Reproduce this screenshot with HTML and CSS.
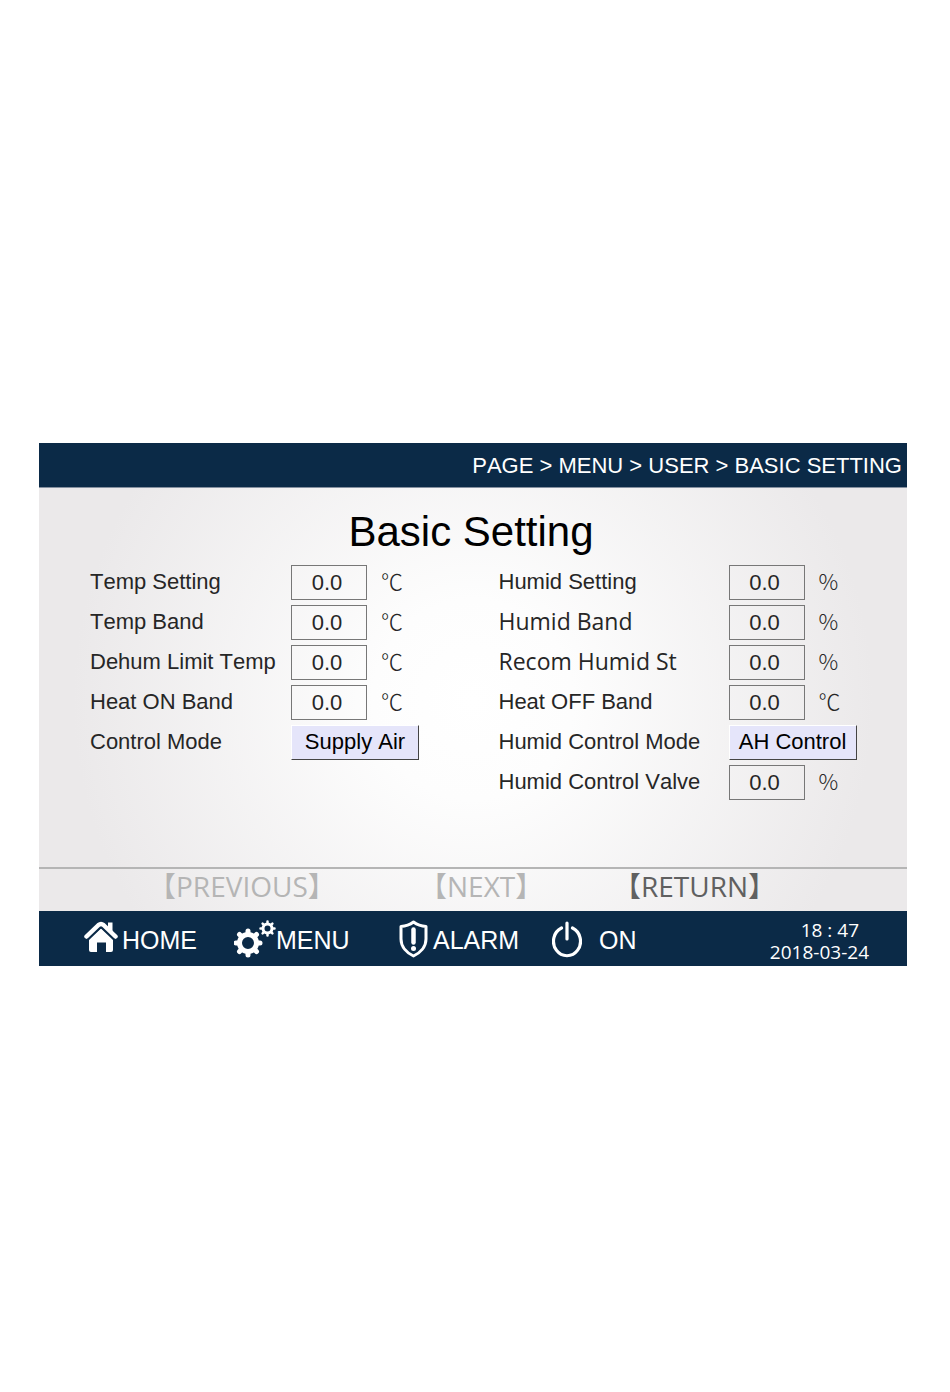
FILE: index.html
```html
<!DOCTYPE html>
<html lang="en">
<head>
  <meta charset="UTF-8">
  <meta name="viewport" content="width=device-width, initial-scale=1.0">
  <title>Basic Setting</title>
  <link rel="stylesheet" href="styles.css">
</head>
<body>
  <div class="panel">
    <header class="topbar">PAGE &gt; MENU &gt; USER &gt; BASIC SETTING</header>

    <main class="content">
      <h1>Basic Setting</h1>
      <form class="settings">
        <div class="column">
          <div class="row">
            <label for="tempSetting">Temp Setting</label>
            <input type="text" id="tempSetting" value="0.0">
            <span class="unit">℃</span>
          </div>
          <div class="row">
            <label for="tempBand">Temp Band</label>
            <input type="text" id="tempBand" value="0.0">
            <span class="unit">℃</span>
          </div>
          <div class="row">
            <label for="dehumLimit">Dehum Limit Temp</label>
            <input type="text" id="dehumLimit" value="0.0">
            <span class="unit">℃</span>
          </div>
          <div class="row">
            <label for="heatOn">Heat ON Band</label>
            <input type="text" id="heatOn" value="0.0">
            <span class="unit">℃</span>
          </div>
          <div class="row">
            <label for="controlMode">Control Mode</label>
            <button type="button" class="mode" id="controlMode">Supply Air</button>
          </div>
        </div>

        <div class="column right">
          <div class="row">
            <label for="humidSetting">Humid Setting</label>
            <input type="text" id="humidSetting" value="0.0">
            <span class="unit">%</span>
          </div>
          <div class="row">
            <label for="humidBand" class="alt">Humid Band</label>
            <input type="text" id="humidBand" value="0.0">
            <span class="unit">%</span>
          </div>
          <div class="row">
            <label for="recomHumid" class="alt">Recom Humid St</label>
            <input type="text" id="recomHumid" value="0.0">
            <span class="unit">%</span>
          </div>
          <div class="row">
            <label for="heatOff">Heat OFF Band</label>
            <input type="text" id="heatOff" value="0.0">
            <span class="unit">℃</span>
          </div>
          <div class="row">
            <label for="humidMode">Humid Control Mode</label>
            <button type="button" class="mode" id="humidMode">AH Control</button>
          </div>
          <div class="row">
            <label for="humidValve">Humid Control Valve</label>
            <input type="text" id="humidValve" value="0.0">
            <span class="unit">%</span>
          </div>
        </div>
      </form>

      <nav class="pager">
        <button type="button" disabled>【PREVIOUS】</button>
        <button type="button" disabled>【NEXT】</button>
        <button type="button">【RETURN】</button>
      </nav>
    </main>

    <footer class="bottombar">
      <button type="button">
        <svg class="home" width="34" height="34" viewBox="0 0 34 34">
          <path d="M5 20 L17 8.500 L29 20 V30 Q29 32 27 32 H22 V22.500 H13 V32 H7 Q5 32 5 30 Z" fill="#fff"/>
          <path d="M2.500 18 L14.500 7 Q17 5 19.500 7 L31.500 18" fill="none" stroke="#0b2a47" stroke-width="5"/>
          <path d="M2.500 16.500 L14.500 5 Q17 3 19.500 5 L31.500 16.500" fill="none" stroke="#fff" stroke-width="4.500" stroke-linecap="round" stroke-linejoin="round"/>
          <path d="M24 2.500h4.500v11l-4.500-4z" fill="#fff"/>
        </svg>
        <span>HOME</span>
      </button>
      <button type="button">
        <svg width="42" height="40" viewBox="0 0 42 40">
          <g fill="none" stroke="#fff">
            <circle cx="14" cy="24" r="8.500" stroke-width="5"/>
            <path d="M14 12v2M14 34v2M2 24h2M24 24h2M5.500 15.500l2 2M20.500 30.500l2 2M5.500 32.500l2-2M20.500 17.500l2-2" stroke-width="5" stroke-linecap="round"/>
            <circle cx="33.500" cy="9.500" r="4.500" stroke-width="3"/>
            <path d="M33.500 2.500v1M33.500 15.500v1M26.500 9.500h1M39.500 9.500h1M28.600 4.600l1 1M37.400 13.400l1 1M28.600 14.400l1-1M37.400 5.600l1-1" stroke-width="2.500" stroke-linecap="round"/>
          </g>
        </svg>
        <span>MENU</span>
      </button>
      <button type="button">
        <svg class="shield" width="29" height="38" viewBox="0 0 29 38">
          <path d="M14.500 2 Q20 6 27 6.500 V19 C27 27 21 33 14.500 36 C8 33 2 27 2 19 V6.500 Q9 6 14.500 2 Z" fill="none" stroke="#fff" stroke-width="3" stroke-linejoin="round"/>
          <path d="M14.500 9.500v13" stroke="#fff" stroke-width="4.500" stroke-linecap="round"/>
          <circle cx="14.500" cy="28.500" r="2.500" fill="#fff"/>
        </svg>
        <span>ALARM</span>
      </button>
      <button type="button">
        <svg class="power" width="30" height="38" viewBox="0 0 30 38">
          <path d="M9.500 8 A13.500 14.500 0 1 0 20.500 8" fill="none" stroke="#fff" stroke-width="3.200" stroke-linecap="round"/>
          <path d="M15 3v16" stroke="#fff" stroke-width="3.200" stroke-linecap="round"/>
        </svg>
        <span>ON</span>
      </button>
      <div class="clock">
        <div class="time">18 : 47</div>
        <div>2018-03-24</div>
      </div>
    </footer>
  </div>
</body>
</html>
```

FILE: styles.css
```css
* {
  box-sizing: border-box;
}
body {
  margin: 0;
  background: #fff;
  color: #262626;
  font-family: "Liberation Sans", Arial, sans-serif;
  font-size: 22px;
  font-kerning: none;
}
.panel {
  margin: 443px 43px 40px 39px;
}
.topbar {
  height: 45px;
  line-height: 46px;
  padding-right: 5px;
  background: #0b2a47;
  border-bottom: 1px solid #8590a0;
  color: #fff;
  text-align: right;
}
.content {
  background: radial-gradient(circle at 50% 50%, #fff 0, #fdfdfd 100px, #ebe9ea 400px);
}
h1 {
  margin: 0;
  padding: 20px 4px 0 0;
  line-height: 48px;
  font-size: 42px;
  font-weight: normal;
  text-align: center;
  color: #000;
}
.settings {
  display: grid;
  grid-template-columns: 50% 1fr;
  min-height: 311px;
  padding: 9px 0 0 51px;
}
.column {
  display: flex;
  flex-direction: column;
  gap: 5px;
}
.row {
  display: grid;
  grid-template-columns: 201px 76px 1fr;
  height: 35px;
}
.right .row {
  grid-template-columns: 230px 76px 1fr;
}
.row label {
  line-height: 34px;
  white-space: nowrap;
}
.row .alt {
  font-family: "Open Sans", sans-serif;
  font-size: 23px;
  line-height: 32px;
}
.row input {
  width: 76px;
  padding: 0 4px 0 0;
  background: transparent;
  border: 1px solid #777;
  color: inherit;
  font: inherit;
  text-align: center;
}
.unit {
  padding-left: 14px;
  line-height: 30px;
  font-family: "Noto Sans CJK SC", sans-serif;
  font-weight: 300;
}
.mode {
  width: 128px;
  padding: 0 0 2px;
  background: #e5e5fa;
  border: 1px solid #fff;
  border-right-color: #444;
  border-bottom-color: #444;
  color: #000;
  font: inherit;
}
.pager {
  display: grid;
  grid-template-columns: 271px 194px 1fr;
  align-items: start;
  justify-items: start;
  height: 44px;
  padding-left: 109px;
  border-top: 2px solid #b5b5b5;
}
.pager button {
  padding: 0;
  background: none;
  border: 0;
  color: #606060;
  font-family: "Open Sans", "Noto Sans CJK SC", sans-serif;
  font-size: 28px;
  line-height: 34px;
}
.pager button:disabled {
  color: #b5b5b5;
}
.bottombar {
  display: grid;
  grid-template-columns: 150px 165px 153px 1fr auto;
  height: 55px;
  padding: 0 38px 0 45px;
  background: #0b2a47;
  color: #fff;
}
.bottombar button {
  display: flex;
  align-items: center;
  padding: 0;
  background: none;
  border: 0;
  color: inherit;
  font: inherit;
  font-size: 25px;
}
.bottombar span {
  padding-top: 4px;
}
.home {
  margin: 0 4px 4px 0;
}
.shield {
  margin-right: 5px;
}
.power {
  margin-right: 17px;
}
.clock {
  padding-top: 8px;
  font-family: "Open Sans", sans-serif;
  font-size: 19px;
  line-height: 22px;
  text-align: right;
}
.time {
  padding-right: 10px;
}
```
